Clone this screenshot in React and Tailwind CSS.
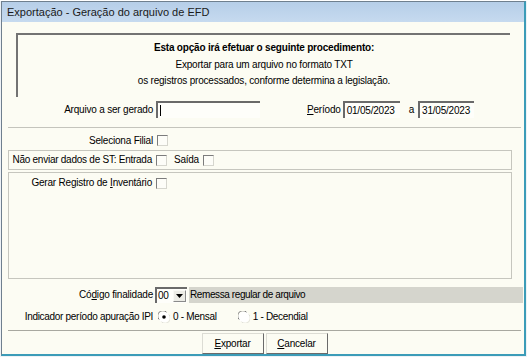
import React from "react";

const U = ({ children }) => <span className="underline underline-offset-[1px]">{children}</span>;

function Check() {
  return (
    <span className="inline-block w-[11px] h-[11px] border border-t-[#7c7c7c] border-l-[#7c7c7c] border-r-[#d6d6ce] border-b-[#d6d6ce] bg-[#fdfdf8]" />
  );
}

function Radio({ checked }) {
  return (
    <svg width="12" height="12" viewBox="0 0 12 12" className="block">
      <circle cx="6" cy="6" r="5.5" fill="#ffffff" />
      <path d="M1.2 8.5 A5 5 0 0 1 8.5 1.2" stroke="#7c7c7c" strokeWidth="1" fill="none" />
      <path d="M10.8 3.5 A5 5 0 0 1 3.5 10.8" stroke="#e0e0d8" strokeWidth="1" fill="none" />
      {checked && <circle cx="6" cy="6" r="1.8" fill="#000" />}
    </svg>
  );
}

function Input({ w, children }) {
  return (
    <div
      className={`h-[17px] ${w} bg-[#fefefa] border-t-2 border-l-2 border-[#6a6a6a] flex items-center pl-[2px] text-black`}
    >
      {children}
    </div>
  );
}

export default function App() {
  return (
    <div className="w-[527px] h-[357px] bg-[#eef2f6] font-['Liberation_Sans',Arial,sans-serif] text-[10px] text-black leading-none">
      <div className="ml-[1px] mt-[1px] w-[525px] h-[355px] flex flex-col border-l border-t border-[#6f7f8e] border-r-2 border-r-[#3c9cb8] border-b-2 border-b-[#3c9cb8]">
        <div className="h-[20px] shrink-0 bg-[linear-gradient(to_bottom,#b6cee8,#c6daef)] flex items-center pl-[5px] text-[11px] text-[#1a1a1a]">
          Exportação - Geração do arquivo de EFD
        </div>
        <div className="flex-1 bg-[#fcfcf3] flex flex-col pl-[6px] pr-[3px]">
          <div className="mt-[11px] ml-[8px] w-[494px] h-[64px] border-t-2 border-l-2 border-[#737373] flex flex-col items-center pt-[8px] tracking-[-0.2px]">
            <div className="h-[16px] font-bold">
              Esta opção irá efetuar o seguinte procedimento:
            </div>
            <div className="h-[16px] mt-[1px]">Exportar para um arquivo no formato TXT</div>
            <div className="h-[16px]">os registros processados, conforme determina a legislação.</div>
          </div>

          <div className="mt-[4px] h-[17px] flex items-center tracking-[-0.2px]">
            <div className="w-[145px] text-right">
              Arquivo a ser <U>g</U>erado
            </div>
            <div className="ml-[3px]">
              <Input w="w-[104px]">
                <span className="w-px h-[11px] bg-black" />
              </Input>
            </div>
            <div className="ml-[47px]">
              <U>P</U>eríodo
            </div>
            <div className="ml-[2px]">
              <Input w="w-[57px]">01/05/2023</Input>
            </div>
            <div className="ml-[9px]">a</div>
            <div className="ml-[4px]">
              <Input w="w-[56px]">31/05/2023</Input>
            </div>
          </div>

          <div className="mt-[9px] h-px bg-[#c4c4bc]" />

          <div className="mt-[6px] h-[13px] flex items-center tracking-[-0.2px]">
            <div className="w-[145px] text-right">Seleciona Filial</div>
            <div className="ml-[4px] flex">
              <Check />
            </div>
          </div>

          <div className="mt-[3px] w-[504px] h-[20px] border border-[#c6c6be] flex items-center tracking-[-0.25px]">
            <div className="w-[143px] text-right">Não enviar dados de ST: Entrada</div>
            <div className="ml-[4px] flex">
              <Check />
            </div>
            <div className="ml-[7px]">Saída</div>
            <div className="ml-[4px] flex">
              <Check />
            </div>
          </div>

          <div className="mt-[2px] w-[504px] h-[107px] border border-[#c6c6be] flex flex-col tracking-[-0.2px]">
            <div className="mt-[4px] h-[12px] flex items-center">
              <div className="w-[143px] text-right">
                Gerar Registro de <U>I</U>nventário
              </div>
              <div className="ml-[4px] flex">
                <Check />
              </div>
            </div>
          </div>

          <div className="mt-[8px] h-[16px] flex items-center tracking-[-0.2px]">
            <div className="w-[145px] text-right">
              Có<U>d</U>igo finalidade
            </div>
            <div className="ml-[2px] w-[32px] h-[16px] bg-[#fefefa] border-t-2 border-l-2 border-[#6a6a6a] flex items-center">
              <span className="pl-[1px] w-[16px]">00</span>
              <div className="w-[13px] h-[12px] bg-[#ecece6] border border-t-[#f8f8f4] border-l-[#f8f8f4] border-r-[#8a8a8a] border-b-[#8a8a8a] flex items-center justify-center">
                <svg width="7" height="4" viewBox="0 0 7 4">
                  <path d="M0 0H7L3.5 4Z" fill="#000" />
                </svg>
              </div>
            </div>
            <div className="ml-[2px] flex-1 mr-[-2px] h-[16px] bg-[#d5d5cd] flex items-center pl-[1px] tracking-[-0.4px]">
              Remessa regular de arquivo
            </div>
          </div>

          <div className="mt-[7px] h-[14px] flex items-center tracking-[-0.3px]">
            <div className="w-[145px] text-right">Indicador período apuração IPI</div>
            <div className="ml-[5px]">
              <Radio checked />
            </div>
            <div className="ml-[3px]">0 - Mensal</div>
            <div className="ml-[21px]">
              <Radio />
            </div>
            <div className="ml-[3px]">1 - Decendial</div>
          </div>

          <div className="mt-[6px] h-px bg-[#a8a8a0]" />

          <div className="mt-[2px] h-[21px] flex justify-center gap-[2px] tracking-[-0.2px]">
            <div className="w-[62px] h-[21px] border border-t-[#dcdcd4] border-l-[#dcdcd4] border-r-[#6a6a6a] border-b-[#6a6a6a] flex items-center justify-center">
              <span>
                <U>E</U>xportar
              </span>
            </div>
            <div className="w-[62px] h-[21px] border border-t-[#dcdcd4] border-l-[#dcdcd4] border-r-[#6a6a6a] border-b-[#6a6a6a] flex items-center justify-center">
              <span>
                <U>C</U>ancelar
              </span>
            </div>
          </div>
        </div>
      </div>
    </div>
  );
}
